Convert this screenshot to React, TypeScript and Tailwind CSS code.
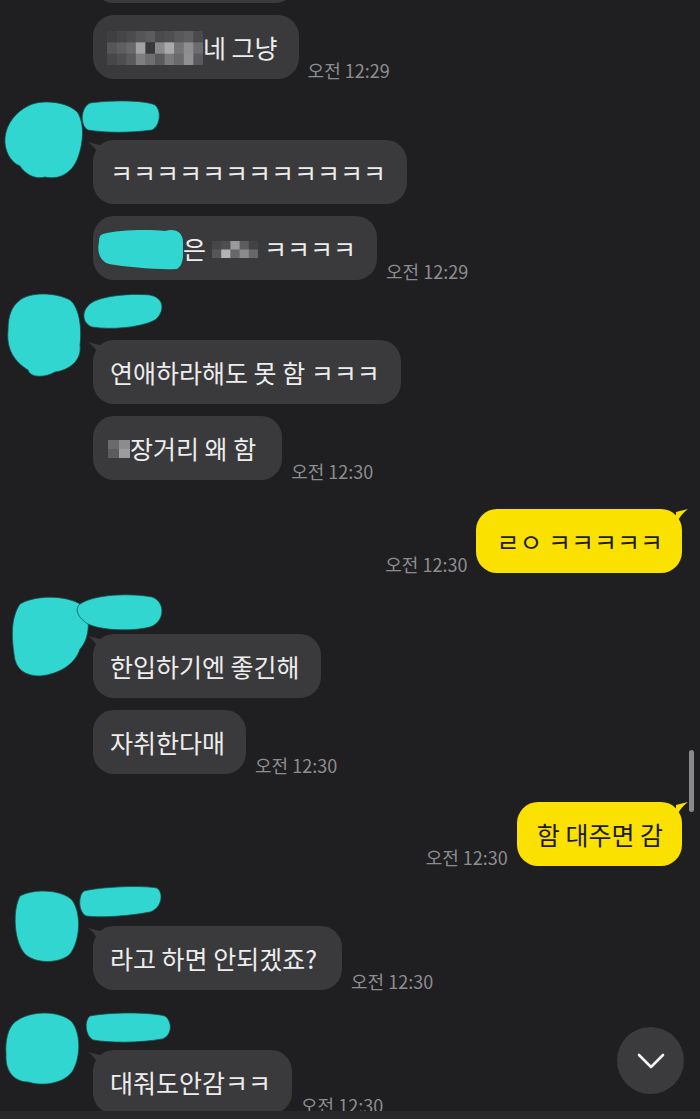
import React from "react";

const CYAN = "#32d6d0";

type Cells = string[][];

function Mosaic({ cells, w, h, className = "" }: { cells: Cells; w: number; h: number; className?: string }) {
  const rows = cells.length;
  const cols = cells[0].length;
  const cw = w / cols;
  const ch = h / rows;
  return (
    <svg width={w} height={h} viewBox={`0 0 ${w} ${h}`} className={`inline-block shrink-0 ${className}`}>
      {cells.map((row, r) =>
        row.map((c, i) => <rect key={`${r}-${i}`} x={i * cw} y={r * ch} width={cw + 0.5} height={ch + 0.5} fill={c} />)
      )}
    </svg>
  );
}

const mosaic1: Cells = [
  ["#3f3f41", "#454547", "#4b4b4d", "#555557", "#5c5c5e", "#4a4a4c", "#4f4f51", "#58585a", "#5e5e60", "#4a4a4c"],
  ["#55555a", "#5e5e60", "#68686a", "#a2a2a4", "#38383a", "#8a8a8c", "#a9a9ab", "#747476", "#8e8e90", "#6c6c6e"],
  ["#47474a", "#4e4e50", "#5a5a5c", "#7e7e80", "#6e6e70", "#5a5a5c", "#7a7a7c", "#6a6a6c", "#909092", "#5a5a5c"],
];

const mosaic2: Cells = [
  ["#47474a", "#4e4e50", "#9a9a9c", "#5c5c5e", "#434345"],
  ["#55555a", "#b3b3b5", "#68686a", "#8a8a8c", "#68686a"],
];

const mosaic3: Cells = [
  ["#6a6a6c", "#8c8c8e"],
  ["#5c5c5e", "#9c9c9e"],
];

function GrayTail() {
  return (
    <svg width="14" height="18" viewBox="0 0 14 18" className="absolute left-[-6px] top-[1px]">
      <path d="M1 1 C5 2, 9 3, 13 4 L13 17 C11 12, 8 6, 1 1 Z" fill="#3a3a3c" />
    </svg>
  );
}

function YellowTail() {
  return (
    <svg width="14" height="18" viewBox="0 0 14 18" className="absolute right-[-7px] top-[-1px]">
      <path d="M13 1 C9 2, 5 3, 1 4 L1 17 C3 12, 6 6, 13 1 Z" fill="#fae100" />
    </svg>
  );
}

function Bubble({ children, tail = false, className = "" }: { children: React.ReactNode; tail?: boolean; className?: string }) {
  return (
    <div
      className={`relative h-[64px] shrink-0 rounded-[21px] bg-[#3a3a3c] pl-[17px] pr-[21px] flex items-center text-[25px] leading-[30px] text-[#ededed] whitespace-nowrap ${className}`}
    >
      {tail && <GrayTail />}
      {children}
    </div>
  );
}

function Time({ t }: { t: string }) {
  return <span className="text-[18px] leading-[18px] text-[#8d8d90] whitespace-nowrap">{t}</span>;
}

function Row({ children, time }: { children: React.ReactNode; time?: string }) {
  return (
    <div className="flex items-end gap-[9px]">
      {children}
      {time && <Time t={time} />}
    </div>
  );
}

function Blobs({ avatar, name }: { avatar: string; name: string }) {
  return (
    <svg width="93" height="80" viewBox="0 0 93 80" overflow="visible" className="block overflow-visible">
      <path d={avatar} fill={CYAN} stroke="#1a4e4c" strokeWidth="0.8" />
      <path d={name} fill={CYAN} stroke="#1a4e4c" strokeWidth="0.8" />
    </svg>
  );
}

function Group({ avatar, name, children, className = "" }: { avatar: string; name: string; children: React.ReactNode; className?: string }) {
  return (
    <div className={`flex ${className}`}>
      <div className="w-[93px] shrink-0">
        <Blobs avatar={avatar} name={name} />
      </div>
      <div className="flex flex-col">
        <div className="h-[40px]" />
        <div className="flex flex-col gap-[12px]">{children}</div>
      </div>
    </div>
  );
}

function YellowRow({ text, time, className = "" }: { text: string; time: string; className?: string }) {
  return (
    <div className={`flex items-end justify-end gap-[9px] pr-[18px] ${className}`}>
      <Time t={time} />
      <div className="relative h-[64px] rounded-[21px] bg-[#fae100] pl-[20px] pr-[19px] flex items-center text-[25px] leading-[30px] text-[#1b1b1b] whitespace-nowrap">
        <YellowTail />
        {text}
      </div>
    </div>
  );
}

export default function App() {
  return (
    <div className="relative w-[700px] h-[1119px] overflow-hidden bg-[#1f1f21] font-['Noto_Sans_CJK_KR','Noto_Sans',sans-serif]">
      <div className="flex flex-col">
        <div className="pl-[93px] mt-[-61px]">
          <Bubble className="w-[203px]">
            <span> </span>
          </Bubble>
        </div>
        <div className="pl-[93px] mt-[12px]">
          <Row time="오전 12:29">
            <Bubble>
              <Mosaic cells={mosaic1} w={96} h={34} className="ml-[-3px] mt-[2px]" />
              <span>네 그냥</span>
            </Bubble>
          </Row>
        </div>

        <Group
          className="mt-[21px]"
          avatar="M28 6 C40 -1, 68 1, 78 13 C86 27, 82 50, 76 62 C70 74, 58 80, 45 77 C35 80, 25 74, 20 66 C10 62, 4 50, 5 38 C6 24, 16 12, 28 6 Z"
          name="M90 3 C110 0, 145 0, 155 5 C162 11, 160 26, 152 30 C130 33, 105 33, 88 30 C80 26, 80 8, 90 3 Z"
        >
          <Row>
            <Bubble tail>ㅋㅋㅋㅋㅋㅋㅋㅋㅋㅋㅋㅋ</Bubble>
          </Row>
          <Row time="오전 12:29">
            <Bubble className="pr-[17px]">
              <svg width="86" height="42" viewBox="0 0 86 42" className="shrink-0 ml-[-13px] mt-[2px]">
                <path
                  d="M6 6 C20 2, 50 1, 68 3 C78 0, 86 4, 86 14 C87 28, 86 38, 80 41 C60 42, 30 39, 12 36 C2 33, 0 22, 2 14 C2 9, 3 7, 6 6 Z"
                  fill={CYAN}
                />
              </svg>
              <span>은</span>
              <Mosaic cells={mosaic2} w={46} h={17} className="ml-[6px] mr-[6px] mt-[2px]" />
              <span>ㅋㅋㅋㅋ</span>
            </Bubble>
          </Row>
        </Group>

        <Group
          className="mt-[20px]"
          avatar="M20 0 C30 -8, 55 -8, 70 0 C80 8, 82 30, 80 45 C82 60, 70 70, 55 72 C45 78, 30 78, 28 70 C15 62, 6 50, 8 30 C8 15, 12 6, 20 0 Z"
          name="M88 6 C95 -4, 130 -7, 150 -5 C165 -2, 165 12, 155 20 C140 28, 110 30, 92 27 C82 23, 82 12, 88 6 Z"
        >
          <Row>
            <Bubble tail>연애하라해도 못 함 ㅋㅋㅋ</Bubble>
          </Row>
          <Row time="오전 12:30">
            <Bubble className="pr-[26px]">
              <Mosaic cells={mosaic3} w={22} h={18} className="ml-[-2px] mt-[2px]" />
              <span>장거리 왜 함</span>
            </Bubble>
          </Row>
        </Group>

        <YellowRow className="mt-[29px]" text="ㄹㅇ ㅋㅋㅋㅋㅋ" time="오전 12:30" />

        <Group
          className="mt-[21px]"
          avatar="M20 10 C35 1, 65 1, 80 10 C92 20, 90 45, 80 55 C75 70, 60 80, 40 82 C25 82, 15 75, 14 60 C12 45, 10 25, 20 10 Z"
          name="M80 10 C95 0, 130 -1, 152 3 C166 8, 165 28, 150 33 C130 38, 100 36, 88 30 C78 24, 74 15, 80 10 Z"
        >
          <Row>
            <Bubble tail>한입하기엔 좋긴해</Bubble>
          </Row>
          <Row time="오전 12:30">
            <Bubble>자취한다매</Bubble>
          </Row>
        </Group>

        <YellowRow className="mt-[28px]" text="함 대주면 감" time="오전 12:30" />

        <Group
          className="mt-[20px]"
          avatar="M20 10 C35 2, 62 4, 72 14 C82 28, 80 55, 70 68 C60 78, 35 78, 25 68 C14 56, 12 25, 20 10 Z"
          name="M84 5 C100 1, 140 -1, 157 2 C164 7, 162 22, 150 26 C130 30, 100 32, 86 30 C78 26, 78 9, 84 5 Z"
        >
          <Row time="오전 12:30">
            <Bubble tail className="pr-[25px]">라고 하면 안되겠죠?</Bubble>
          </Row>
        </Group>

        <Group
          className="mt-[20px]"
          avatar="M15 12 C30 0, 60 0, 72 12 C82 25, 80 50, 72 62 C62 75, 40 76, 28 72 C15 72, 5 62, 6 45 C5 30, 8 18, 15 12 Z"
          name="M90 6 C110 2, 150 2, 165 6 C173 12, 172 26, 162 29 C140 33, 110 33, 93 30 C85 26, 84 10, 90 6 Z"
        >
          <Row time="오전 12:30">
            <Bubble tail>대줘도안감ㅋㅋ</Bubble>
          </Row>
        </Group>
      </div>

      {/* scrollbar */}
      <div className="absolute left-[689px] top-[750px] w-[5px] h-[62px] rounded-full bg-[#8a8a8c]" />

      {/* scroll-down button */}
      <div className="absolute left-[617px] top-[1027px] w-[67px] h-[67px] rounded-full bg-[#3b3b3d] flex items-center justify-center">
        <svg width="30" height="18" viewBox="0 0 30 18">
          <path d="M3 3 L15 15 L27 3" fill="none" stroke="#f2f2f2" strokeWidth="2.6" strokeLinecap="round" strokeLinejoin="round" />
        </svg>
      </div>

      {/* bottom edge */}
      <div className="absolute left-0 right-0 bottom-0 h-[8px] bg-[#28282a]" />
    </div>
  );
}
